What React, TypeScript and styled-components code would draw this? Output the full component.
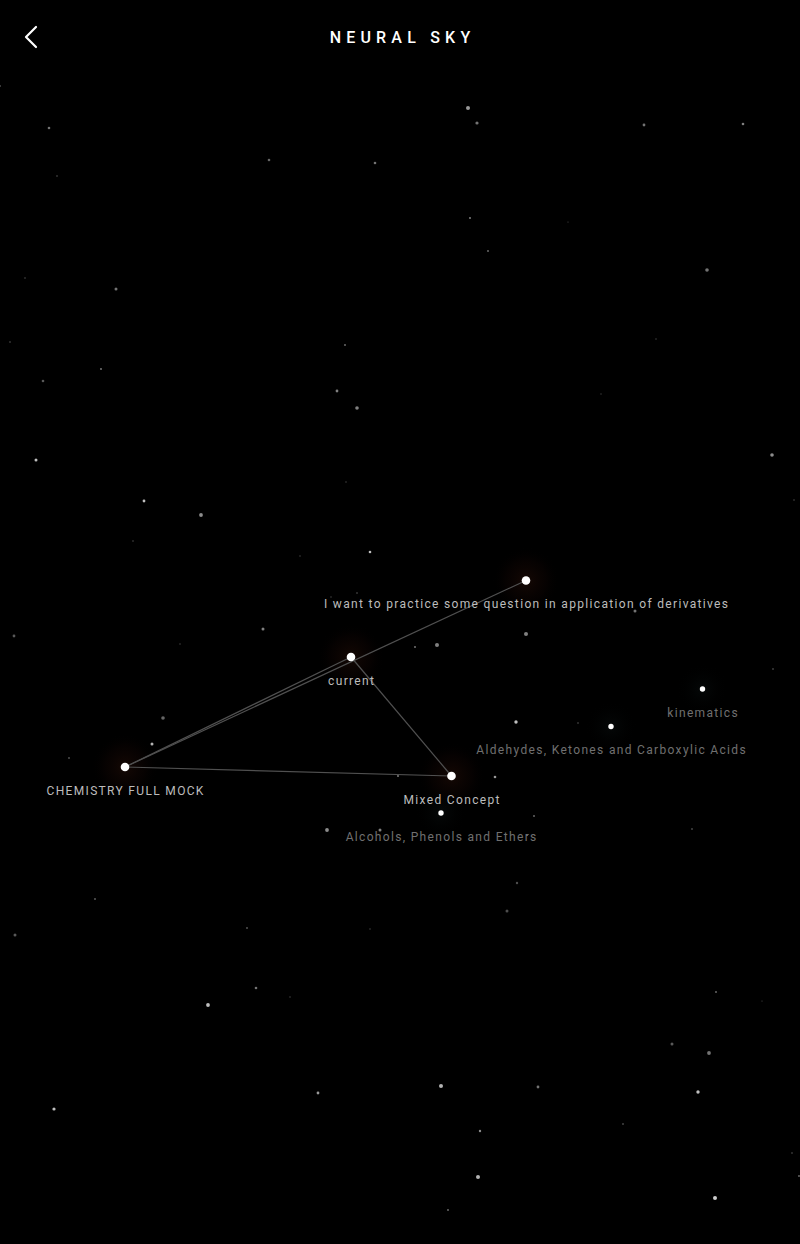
import React from 'react';
import styled, { createGlobalStyle } from 'styled-components';

const GlobalStyle = createGlobalStyle`
  html, body {
    margin: 0;
    padding: 0;
    background: #000;
  }
  * {
    box-sizing: border-box;
  }
`;

type Star = [number, number, number, number];

// x, y, radius, opacity
const STARS: Star[] = [
  [0, 86, 0.8, 0.5], [49, 128, 1.3, 0.45], [57, 176, 0.7, 0.4], [269, 160, 1.3, 0.4],
  [375, 163, 1.3, 0.45], [468, 108, 2, 0.6], [477, 123, 1.6, 0.45], [644, 125, 1.4, 0.45],
  [743, 124, 1.3, 0.5], [470, 218, 0.9, 0.55], [488, 251, 0.9, 0.45], [568, 222, 0.6, 0.3],
  [707, 270, 1.8, 0.45], [25, 278, 0.8, 0.3], [116, 289, 1.5, 0.45], [10, 342, 0.7, 0.4],
  [345, 345, 0.9, 0.45], [101, 369, 0.9, 0.5], [43, 381, 1.3, 0.35], [337, 391, 1.4, 0.5],
  [357, 408, 1.8, 0.5], [656, 339, 0.7, 0.3], [601, 394, 0.7, 0.25], [772, 455, 1.8, 0.55],
  [36, 460, 1.5, 0.75], [346, 482, 0.7, 0.3], [144, 501, 1.4, 0.75], [201, 515, 1.9, 0.55],
  [133, 541, 0.7, 0.35], [794, 500, 0.7, 0.35], [300, 556, 0.7, 0.3], [370, 552, 1.3, 0.75],
  [357, 593, 0.8, 0.35], [331, 597, 0.7, 0.3], [635, 611, 1.5, 0.45], [14, 636, 1.4, 0.35],
  [263, 629, 1.5, 0.5], [180, 644, 0.7, 0.3], [415, 647, 1, 0.45], [437, 645, 2, 0.5],
  [526, 634, 2, 0.5], [773, 669, 0.8, 0.4], [163, 718, 1.8, 0.4], [152, 744, 1.5, 0.7],
  [69, 758, 1, 0.3], [516, 722, 1.7, 0.75], [578, 723, 0.7, 0.4], [495, 777, 1.3, 0.6],
  [398, 776, 0.9, 0.55], [534, 816, 1, 0.4], [327, 830, 1.9, 0.55], [380, 830, 1.5, 0.5],
  [527, 835, 0.9, 0.5], [692, 829, 0.8, 0.45], [517, 883, 1.2, 0.3], [507, 911, 1.5, 0.3],
  [95, 899, 0.8, 0.6], [15, 935, 1.5, 0.35], [247, 928, 0.8, 0.55], [370, 929, 0.7, 0.3],
  [208, 1005, 1.9, 0.75], [256, 988, 1.3, 0.45], [290, 997, 0.7, 0.3], [716, 992, 1, 0.4],
  [762, 1001, 0.6, 0.3], [672, 1044, 1.5, 0.35], [709, 1053, 1.9, 0.45], [441, 1086, 2, 0.7],
  [538, 1087, 1.4, 0.45], [318, 1093, 1.4, 0.6], [698, 1092, 1.7, 0.75], [54, 1109, 1.6, 0.75],
  [480, 1131, 1.2, 0.55], [623, 1124, 0.8, 0.45], [792, 1153, 0.7, 0.4], [799, 1176, 1, 0.4],
  [478, 1177, 2, 0.7], [715, 1198, 2, 0.8], [448, 1210, 0.9, 0.45],
];

interface SkyNode {
  id: string;
  label: string;
  x: number;
  y: number;
  active: boolean;
}

const NODES: SkyNode[] = [
  { id: 'deriv', label: 'I want to practice some question in application of derivatives', x: 526, y: 580.5, active: true },
  { id: 'current', label: 'current', x: 351, y: 657, active: true },
  { id: 'chem', label: 'CHEMISTRY FULL MOCK', x: 125, y: 767, active: true },
  { id: 'mixed', label: 'Mixed Concept', x: 451.5, y: 776, active: true },
  { id: 'kin', label: 'kinematics', x: 702.5, y: 689, active: false },
  { id: 'ald', label: 'Aldehydes, Ketones and Carboxylic Acids', x: 611, y: 726.5, active: false },
  { id: 'alc', label: 'Alcohols, Phenols and Ethers', x: 441, y: 813, active: false },
];

const LINKS: [string, string][] = [
  ['deriv', 'chem'],
  ['current', 'chem'],
  ['current', 'mixed'],
  ['chem', 'mixed'],
];

const Page = styled.div`
  position: relative;
  width: 800px;
  height: 1244px;
  overflow: hidden;
  background: #000;
  font-family: Roboto, 'Liberation Sans', sans-serif;
`;

const Header = styled.header`
  position: relative;
  z-index: 2;
  height: 76px;
  display: grid;
  grid-template-columns: 60px 1fr 60px;
  align-items: center;
`;

const BackButton = styled.button`
  width: 60px;
  height: 76px;
  display: flex;
  align-items: center;
  justify-content: flex-start;
  padding: 0 0 2px 22px;
  background: none;
  border: none;
  cursor: pointer;
`;

const Title = styled.h1`
  margin: 0;
  padding-left: 5px;
  text-align: center;
  color: #fff;
  font-size: 16px;
  font-weight: 500;
  letter-spacing: 5.2px;
  line-height: 20px;
`;

const Sky = styled.svg`
  position: absolute;
  inset: 0;
  z-index: 0;
`;

const Label = styled.span<{ $active: boolean }>`
  position: absolute;
  z-index: 1;
  transform: translateX(-50%);
  padding-left: 1.3px;
  white-space: nowrap;
  font-size: 12px;
  font-weight: 400;
  line-height: 16px;
  letter-spacing: 1.33px;
  color: ${p => (p.$active ? '#bcbcbc' : '#707070')};
`;

const ChevronLeft = () => (
  <svg width="16" height="24" viewBox="0 0 16 24" fill="none">
    <polyline points="14,2 4,12 14,22" stroke="#fff" strokeWidth="2.2" strokeLinecap="round" strokeLinejoin="round" />
  </svg>
);

export default function App() {
  const byId = Object.fromEntries(NODES.map(n => [n.id, n]));

  return (
    <Page>
      <GlobalStyle />
      <Sky width="800" height="1244" viewBox="0 0 800 1244">
        <defs>
          <radialGradient id="glow">
            <stop offset="0%" stopColor="#2a1008" stopOpacity="0.5" />
            <stop offset="60%" stopColor="#140604" stopOpacity="0.3" />
            <stop offset="100%" stopColor="#000" stopOpacity="0" />
          </radialGradient>
          <radialGradient id="glowCool">
            <stop offset="0%" stopColor="#0a1010" stopOpacity="0.5" />
            <stop offset="100%" stopColor="#000" stopOpacity="0" />
          </radialGradient>
        </defs>

        {NODES.map(n => (
          <circle key={`g-${n.id}`} cx={n.x} cy={n.y} r={n.active ? 34 : 26} fill={n.active ? 'url(#glow)' : 'url(#glowCool)'} />
        ))}

        {STARS.map(([x, y, r, o], i) => (
          <circle key={i} cx={x} cy={y} r={r} fill="#fff" opacity={o} />
        ))}

        {LINKS.map(([a, b]) => (
          <line
            key={`${a}-${b}`}
            x1={byId[a].x}
            y1={byId[a].y}
            x2={byId[b].x}
            y2={byId[b].y}
            stroke="#505050"
            strokeWidth="1.2"
          />
        ))}

        {NODES.map(n => (
          <circle key={n.id} cx={n.x} cy={n.y} r={n.active ? 4.3 : 2.7} fill="#fff" />
        ))}
      </Sky>

      <Header>
        <BackButton aria-label="Back">
          <ChevronLeft />
        </BackButton>
        <Title>NEURAL SKY</Title>
        <div />
      </Header>

      {NODES.map(n => (
        <Label key={n.id} $active={n.active} style={{ left: n.x, top: n.y + 15.5 }}>
          {n.label}
        </Label>
      ))}
    </Page>
  );
}
